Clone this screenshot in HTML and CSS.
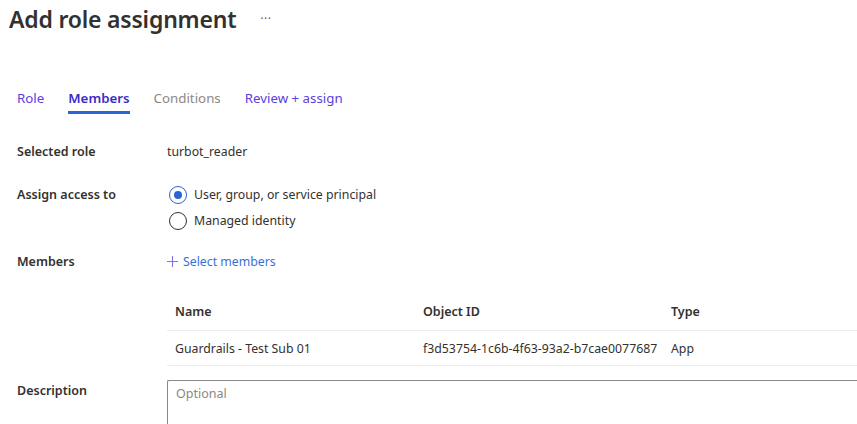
FILE: index.html
```html
<!DOCTYPE html>
<html>
<head>
<meta charset="utf-8">
<link rel="stylesheet" href="styles.css">
</head>
<body>
<div class="page">
  <header class="header">
    <h1 class="title">Add role assignment</h1>
    <span class="more">···</span>
  </header>
  <nav class="tabs">
    <span class="tab visited">Role</span>
    <span class="tab active">Members</span>
    <span class="tab muted">Conditions</span>
    <span class="tab visited">Review + assign</span>
  </nav>
  <div class="form">
    <div class="row r-role">
      <div class="label">Selected role</div>
      <div class="value">turbot_reader</div>
    </div>
    <div class="row r-assign">
      <div class="label">Assign access to</div>
      <div class="value radios">
        <label class="radio"><span class="circle checked"></span>User, group, or service principal</label>
        <label class="radio"><span class="circle"></span>Managed identity</label>
      </div>
    </div>
    <div class="row r-members">
      <div class="label">Members</div>
      <div class="value"><span class="select"><svg class="plus" width="11" height="11" viewBox="0 0 11 11"><path d="M5.5 0V11M0 5.5H11" stroke="#8b6fe0" stroke-width="1.1" fill="none"/></svg>Select members</span></div>
    </div>
    <div class="row r-table">
      <div class="label"></div>
      <div class="value">
        <div class="table">
          <div class="trow thead"><span class="c1">Name</span><span class="c2">Object ID</span><span class="c3">Type</span></div>
          <div class="trow tbody"><span class="c1">Guardrails - Test Sub 01</span><span class="c2">f3d53754-1c6b-4f63-93a2-b7cae0077687</span><span class="c3">App</span></div>
        </div>
      </div>
    </div>
    <div class="row r-desc">
      <div class="label">Description</div>
      <div class="value"><div class="textarea">Optional</div></div>
    </div>
  </div>
</div>
</body>
</html>
```
FILE: styles.css
```css
* { box-sizing: border-box; }
html, body { margin: 0; padding: 0; background: #fff; overflow: hidden; }
body { font-family: "Noto Sans", "Open Sans", sans-serif; color: #323130; font-size: 12.3px; }
.page { width: 857px; height: 424px; }
.header { display: flex; align-items: center; height: 38px; padding-left: 9px; }
.title { margin: 0; font-size: 23px; font-weight: 600; letter-spacing: -0.2px; color: #323130; }
.more { margin-left: 24px; font-size: 12px; color: #605e5c; margin-top: -2px; letter-spacing: 0.5px; }
.tabs { display: flex; gap: 24px; padding-left: 17px; margin-top: 47px; height: 29px; }
.tab { font-size: 13.3px; line-height: 26px; height: 29px; }
.tab.visited { color: #5b3fde; }
.tab.active { color: #3c2bc7; font-weight: 600; border-bottom: 3px solid #2b63d8; }
.tab.muted { color: #8a8886; }
.form { margin-top: 29px; }
.row { display: flex; padding-left: 17px; }
.label { width: 150px; flex: none; font-weight: 600; font-size: 12.5px; color: #323130; }
.value { flex: 1; }
.r-role { height: 43px; line-height: 17px; }
.radios { display: flex; flex-direction: column; gap: 8px; margin-left: 2px; }
.radio { display: flex; align-items: center; line-height: 18px; }
.circle { width: 18px; height: 18px; border-radius: 50%; border: 1.5px solid #323130; margin-right: 7px; position: relative; flex: none; }
.circle.checked { border-color: #2b63d8; }
.circle.checked::after { content: ""; position: absolute; left: 3.5px; top: 3.5px; width: 8px; height: 8px; border-radius: 50%; background: #2b63d8; }
.r-assign { height: 67px; line-height: 18px; }
.r-members { height: 40px; line-height: 17px; }
.select { color: #3a6fd9; display: inline-flex; align-items: center; }
.plus { margin-right: 5px; }
.trow { display: flex; align-items: center; border-bottom: 1px solid #edebe9; padding-left: 8px; }
.thead { font-weight: 600; height: 38px; font-size: 12.5px; }
.tbody { height: 35px; padding-top: 1px; }
.c1 { width: 248px; flex: none; }
.c2 { width: 248px; flex: none; }
.r-table { height: 87px; }
.r-desc .label { padding-top: 2px; }
.textarea { height: 60px; border: 1px solid #8a8886; border-right: none; border-radius: 2px 0 0 2px; padding: 4px 8px; color: #8a8886; font-size: 12.5px; }
```
